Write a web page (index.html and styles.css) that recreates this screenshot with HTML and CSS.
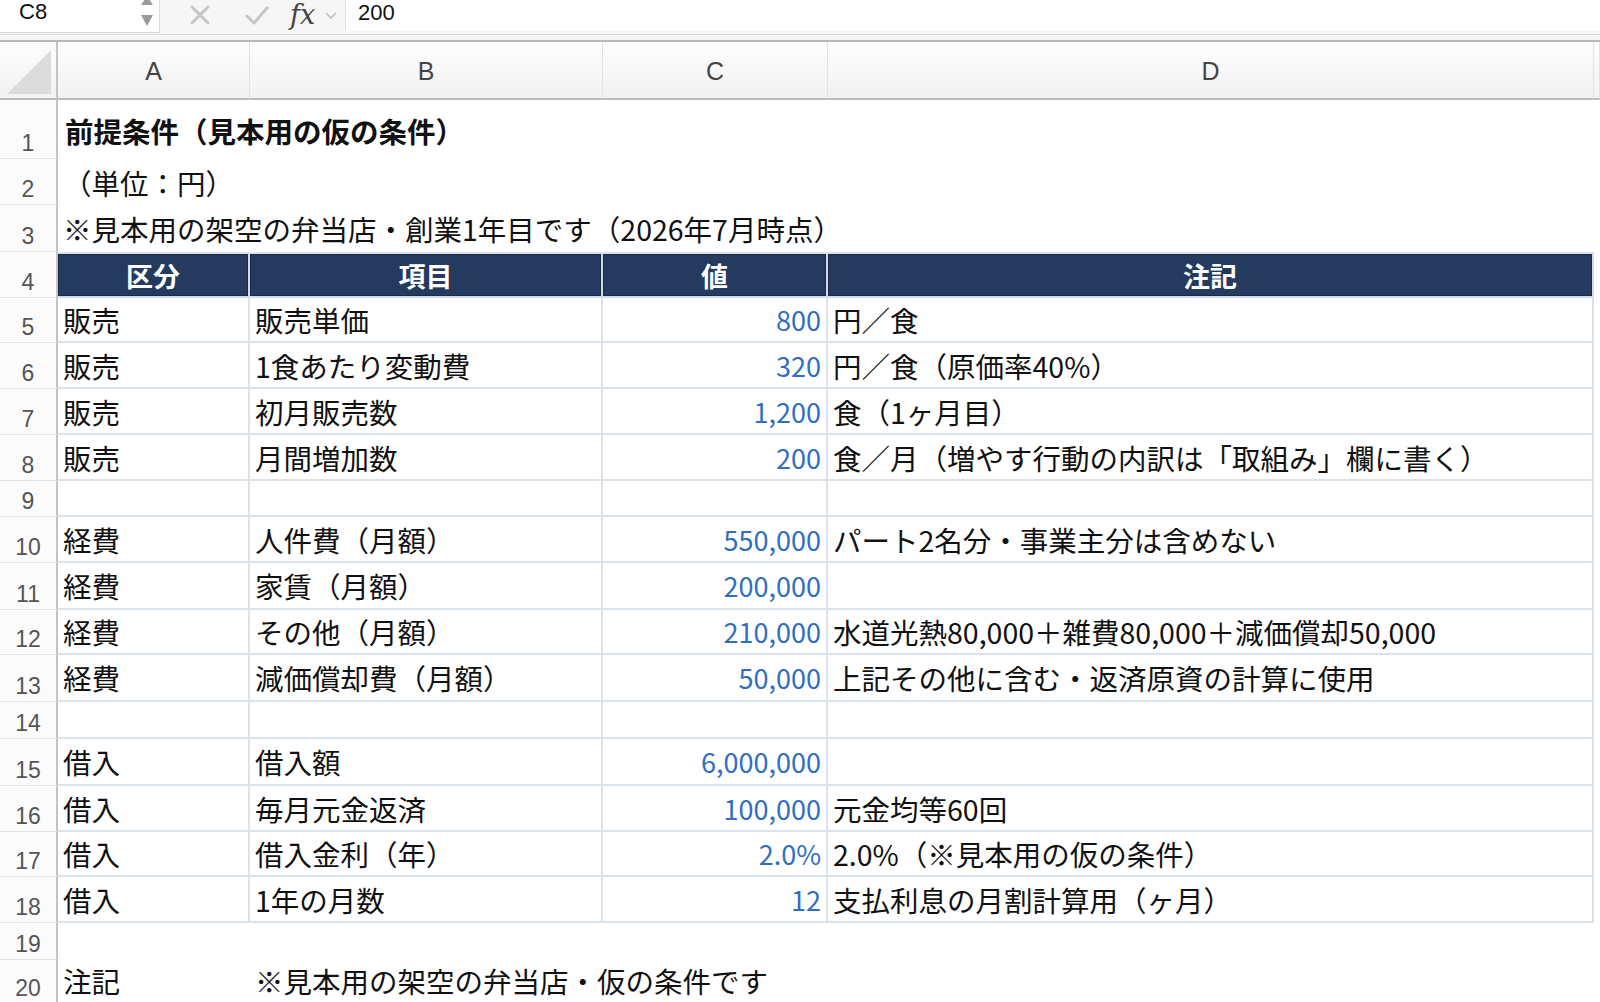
FILE: index.html
```html
<!DOCTYPE html>
<html lang="ja">
<head>
<meta charset="utf-8">
<title>前提条件</title>
<link rel="stylesheet" href="styles.css">
</head>
<body>
<div class="fbar">
  <div class="namebox">
    <span class="ref">C8</span>
    <svg class="spin" width="12" height="30" viewBox="0 0 12 30"><polygon points="0,5 12,5 6,-4" fill="#9a9a9a"/><polygon points="0,15 12,15 6,26" fill="#9a9a9a"/></svg>
  </div>
  <div class="tools">
    <svg class="ico x" width="22" height="22" viewBox="0 0 22 22"><path d="M3 3 L19 19 M19 3 L3 19" stroke="#c6c6c6" stroke-width="3" stroke-linecap="round" fill="none"/></svg>
    <svg class="ico ok" width="26" height="22" viewBox="0 0 26 22"><path d="M3 12 L10 19 L23 4" stroke="#c6c6c6" stroke-width="3" stroke-linecap="round" stroke-linejoin="round" fill="none"/></svg>
    <span class="fx">fx</span>
    <svg class="chev" width="12" height="8" viewBox="0 0 12 8"><path d="M1 1 L6 6 L11 1" stroke="#c0c0c0" stroke-width="1.6" fill="none"/></svg>
  </div>
  <div class="input">200</div>
</div>
<div class="sep"></div>
<div class="sheet">
  <div class="corner"><svg width="50" height="50" viewBox="0 0 50 50"><polygon points="48,4 48,48 4,48" fill="#dcdcdc"/></svg></div>
  <div class="ch">A</div><div class="ch">B</div><div class="ch">C</div><div class="ch">D</div><div class="ch"></div>

  <div class="rh">1</div><div class="txt title span">前提条件（見本用の仮の条件）</div>
  <div class="rh">2</div><div class="txt span">（単位：円）</div>
  <div class="rh">3</div><div class="txt span">※見本用の架空の弁当店・創業1年目です（2026年7月時点）</div>

  <div class="rh">4</div><div class="hd">区分</div><div class="hd">項目</div><div class="hd">値</div><div class="hd">注記</div><div class="e"></div>

  <div class="rh">5</div><div class="c">販売</div><div class="c">販売単価</div><div class="c num">800</div><div class="c">円／食</div><div class="e"></div>
  <div class="rh">6</div><div class="c">販売</div><div class="c">1食あたり変動費</div><div class="c num">320</div><div class="c">円／食（原価率40%）</div><div class="e"></div>
  <div class="rh">7</div><div class="c">販売</div><div class="c">初月販売数</div><div class="c num">1,200</div><div class="c">食（1ヶ月目）</div><div class="e"></div>
  <div class="rh">8</div><div class="c">販売</div><div class="c">月間増加数</div><div class="c num">200</div><div class="c">食／月（増やす行動の内訳は「取組み」欄に書く）</div><div class="e"></div>
  <div class="rh">9</div><div class="c"></div><div class="c"></div><div class="c"></div><div class="c"></div><div class="e"></div>
  <div class="rh">10</div><div class="c">経費</div><div class="c">人件費（月額）</div><div class="c num">550,000</div><div class="c">パート2名分・事業主分は含めない</div><div class="e"></div>
  <div class="rh">11</div><div class="c">経費</div><div class="c">家賃（月額）</div><div class="c num">200,000</div><div class="c"></div><div class="e"></div>
  <div class="rh">12</div><div class="c">経費</div><div class="c">その他（月額）</div><div class="c num">210,000</div><div class="c">水道光熱80,000＋雑費80,000＋減価償却50,000</div><div class="e"></div>
  <div class="rh">13</div><div class="c">経費</div><div class="c">減価償却費（月額）</div><div class="c num">50,000</div><div class="c">上記その他に含む・返済原資の計算に使用</div><div class="e"></div>
  <div class="rh">14</div><div class="c"></div><div class="c"></div><div class="c"></div><div class="c"></div><div class="e"></div>
  <div class="rh">15</div><div class="c">借入</div><div class="c">借入額</div><div class="c num">6,000,000</div><div class="c"></div><div class="e"></div>
  <div class="rh">16</div><div class="c">借入</div><div class="c">毎月元金返済</div><div class="c num">100,000</div><div class="c">元金均等60回</div><div class="e"></div>
  <div class="rh">17</div><div class="c">借入</div><div class="c">借入金利（年）</div><div class="c num">2.0%</div><div class="c">2.0%（※見本用の仮の条件）</div><div class="e"></div>
  <div class="rh">18</div><div class="c">借入</div><div class="c">1年の月数</div><div class="c num">12</div><div class="c">支払利息の月割計算用（ヶ月）</div><div class="e"></div>
  <div class="rh">19</div><div class="txt span"></div>
  <div class="rh last">20</div><div class="txt last">注記</div><div class="txt last span2">※見本用の架空の弁当店・仮の条件です</div>
</div>
</body>
</html>
```

FILE: styles.css
```css
html, body {
  margin: 0;
  padding: 0;
  background: #ffffff;
  overflow: hidden;
}
body {
  width: 1600px;
  height: 1002px;
  font-family: "Noto Sans CJK JP", "Noto Sans", sans-serif;
  color: #111;
}

/* formula bar */
.fbar {
  height: 35px;
  display: flex;
  background: #f6f6f6;
  border-bottom: 1px solid #dadada;
  box-sizing: border-box;
}
.namebox {
  width: 160px;
  height: 33px;
  background: #ffffff;
  border-right: 1px solid #dcdcdc;
  border-bottom: 1px solid #d6d6d6;
  box-sizing: border-box;
  display: flex;
  align-items: flex-start;
  justify-content: space-between;
  padding: 0 6px 0 19px;
}
.ref {
  font-family: "Liberation Sans", Arial, sans-serif;
  font-size: 22px;
  line-height: 24px;
  color: #111;
}
.tools {
  width: 185px;
  display: flex;
  align-items: center;
  height: 30px;
}
.ico.x { margin-left: 29px; }
.ico.ok { margin-left: 33px; }
.fx {
  font-family: "DejaVu Serif", "Liberation Serif", serif;
  font-style: italic;
  font-size: 27px;
  color: #444;
  margin-left: 20px;
  line-height: 30px;
}
.chev { margin-left: 10px; margin-top: 2px; }
.input {
  flex: 1;
  height: 31px;
  background: #ffffff;
  border-left: 1px solid #e0e0e0;
  font-family: "Liberation Sans", Arial, sans-serif;
  font-size: 22px;
  line-height: 26px;
  padding-left: 12px;
  color: #111;
}
.sep {
  height: 7px;
  background: #f4f4f4;
  border-top: 1px solid #fafafa;
  border-bottom: 2px solid #b8b8b8;
  box-sizing: border-box;
}

/* sheet grid */
.sheet {
  display: grid;
  grid-template-columns: 58px 192px 353px 225px 766px 1fr;
  grid-template-rows: 58px 59px 46px 47px 46px 45px 46px 46px 46px 36px 46px 47px 45px 47px 37px 47px 46px 45px 46px 37px 42px;
}
.corner {
  background: linear-gradient(#fdfdfd, #f2f2f2);
  border-right: 2px solid #c4c4c4;
  border-bottom: 2px solid #bcbcbc;
  box-sizing: border-box;
  display: flex;
  align-items: flex-end;
  justify-content: flex-end;
  padding: 0 3px 2px 0;
}
.ch {
  background: linear-gradient(#fefefe, #f1f1f1);
  border-right: 1px solid #e2e2e2;
  border-bottom: 2px solid #bcbcbc;
  box-sizing: border-box;
  display: flex;
  align-items: center;
  justify-content: center;
  padding-top: 3px;
  font-family: "Liberation Sans", Arial, sans-serif;
  font-size: 25px;
  color: #444;
}
.rh {
  background: #fbfbfb;
  border-right: 2px solid #c4c4c4;
  border-bottom: 1px solid #e4e4e4;
  box-sizing: border-box;
  display: flex;
  align-items: flex-end;
  justify-content: center;
  padding-bottom: 2px;
  font-family: "Liberation Sans", Arial, sans-serif;
  font-size: 23px;
  line-height: 26px;
  color: #555;
}
.txt, .c {
  display: flex;
  align-items: center;
  padding: 0 5px;
  font-size: 28.5px;
  white-space: nowrap;
  box-sizing: border-box;
  overflow: visible;
}
.span { grid-column: 2 / -1; }
.span2 { grid-column: 3 / -1; }
.title { font-weight: 700; font-size: 28.5px; padding-left: 7px; padding-top: 2px; }
.c {
  border-right: 2px solid #dce2eb;
  border-bottom: 2px solid #dce2eb;
}
.num {
  justify-content: flex-end;
  color: #2f6ec3;
  font-size: 27px;
  padding-right: 5px;
}
.hd {
  background: #243a5e;
  color: #ffffff;
  font-weight: 700;
  font-size: 27px;
  display: flex;
  align-items: center;
  justify-content: center;
  border-top: 2px solid #dce2eb;
  border-right: 2px solid #d3dbe6;
  border-bottom: 2px solid #d3dbe6;
  box-shadow: inset 0 0 0 1px #1a2b48;
  box-sizing: border-box;
}
.txt.last {
  align-items: flex-start;
  line-height: 36px;
  padding-top: 3px;
}
.rh.last {
  align-items: flex-start;
  padding-top: 15px;
  padding-bottom: 0;
  border-bottom: none;
}
```
